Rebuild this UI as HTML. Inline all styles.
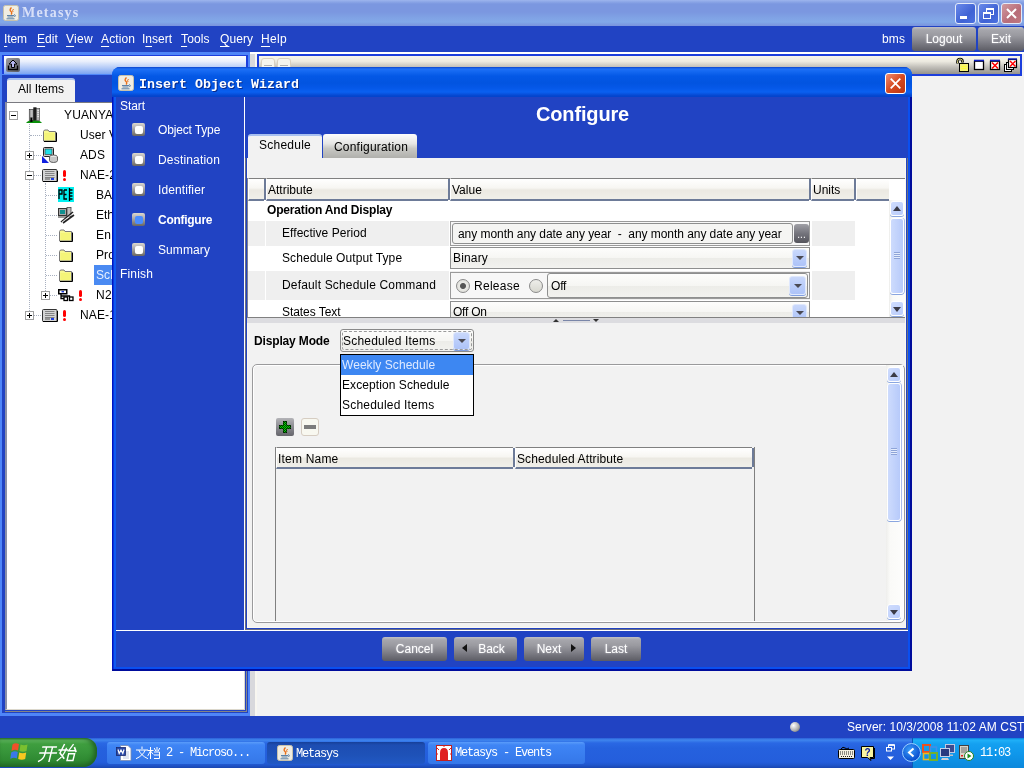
<!DOCTYPE html>
<html><head><meta charset="utf-8">
<style>
*{box-sizing:border-box;margin:0;padding:0}
html,body{width:1024px;height:768px;overflow:hidden}
body{position:relative;background:#2143c3;font-family:"Liberation Sans",sans-serif;font-size:12px;color:#000}
.a{position:absolute}
.w{color:#fff}
.t{position:absolute;white-space:nowrap;line-height:16px}
/* main title bar */
#mt{left:0;top:0;width:1024px;height:26px;background:linear-gradient(#9db5ed 0,#8aa5e6 2px,#7b97e0 4px,#7b97e0 12px,#80a3e5 18px,#82a9e8 22px,#7d9de2 24px,#7a94de 26px)}
#mt .ttl{left:22px;top:5px;font-family:"Liberation Serif",serif;font-weight:bold;font-size:14px;color:#d8e0f8;letter-spacing:1.2px}
.cap{position:absolute;top:3px;width:21px;height:21px;border:1px solid #e4ebfa;border-radius:3px}
/* menu */
#menu{left:0;top:26px;width:1024px;height:26px;background:#2143c3}
.btn{position:absolute;border-radius:2px;background:linear-gradient(#c0c0c4 0,#a6a6ac 12%,#9a9aa0 35%,#7e7e86 65%,#5c5c64 100%);color:#fff;text-align:center;font-size:12px;border-radius:3px;text-shadow:0 0 2px #c8c8d0}
/* panels */
.tb{position:absolute;border:1px solid #5c86f6;background:linear-gradient(#fff 0,#dfe8fb 45%,#a9c0f4 100%)}
.tbg{position:absolute;border:1px solid #5c86f6;background:linear-gradient(#fff 0,#e6e6e6 45%,#bdbdbd 100%)}

/* dialog */
#dlg{border-left:4px solid #0f5af0;border-right:4px solid #0a4ff0;border-bottom:4px solid #0a4ff0}
#dt{left:-4px;top:0;width:800px;height:30px;border-radius:8px 8px 0 0;background:linear-gradient(#0a44cc 0,#1e70f6 2px,#1266f0 5px,#0458e6 9px,#0254e0 16px,#0558e8 21px,#0a60f0 25px,#0444cc 29px)}
#dt .ttl{left:27px;top:10px;font-family:"Liberation Mono",monospace;font-weight:bold;font-size:13.33px;color:#fff;text-shadow:1px 1px 0 #0a2a8a}
.nav .ic{position:absolute;left:16px;width:13px;height:13px;border-radius:2px;background:linear-gradient(#dcd8cc 0,#b4b2b4 35%,#8a8886 70%,#6a6660 100%);}
.nav .ic i{position:absolute;left:3px;top:3px;width:8px;height:8px;border-radius:2px;background:#fff}
.nav .ic.sel i{background:#4b8dff}
.hd{position:absolute;top:0;height:23px;background:linear-gradient(#fff 0,#f7f6f2 45%,#ebe9e2 55%,#f0efe9 100%);border-top:1px solid #808080;border-bottom:2px solid #6d7b98;border-left:1px solid #fff;line-height:19px;padding:2px 0 0 1px;white-space:nowrap;overflow:hidden}
.hs{position:absolute;top:1px;width:2px;height:21px;background:#6d7b98}
.cb{position:absolute;border:1px solid #8e8f8f;background:linear-gradient(#fdfdfc 0,#f6f6f3 50%,#ecece8 52%,#f2f2ef 100%);white-space:nowrap;overflow:hidden}
.ar{position:absolute;width:15px;border:1px solid #dfe8fd;border-radius:3px;background:linear-gradient(#c9d8fb 0,#bacdfa 50%,#adc3f8 100%);box-shadow:0 1px 0 #7f9ee0}
.ar:after{content:"";position:absolute;left:3px;top:50%;margin-top:-2px;border:4px solid transparent;border-top:4px solid #4a4a54;border-bottom:0}
.ar.w17{width:17px}.ar.w17:after{left:4px}
.sb{position:absolute;background:linear-gradient(90deg,#eeeeec,#fafaf8 4px,#fdfdfc)}
.sbb{position:absolute;left:1px;width:14px;height:15px;border:1px solid #fff;border-radius:3px;background:linear-gradient(135deg,#cfdcfd,#b9ccfb);box-shadow:0 1px 0 #8aa6e0}
.sbt{position:absolute;left:1px;width:14px;border:1px solid #fff;border-radius:3px;background:linear-gradient(90deg,#cddbfd,#b7cafa);box-shadow:0 1px 0 #8aa6e0,1px 0 0 #a8bcec}
.sbt:before{content:"";position:absolute;left:3px;top:50%;margin-top:-4px;width:6px;height:7px;background:repeating-linear-gradient(#8ea4d8 0,#8ea4d8 1px,#e4ecfc 1px,#e4ecfc 2px)}
.up:after{content:"";position:absolute;left:2px;top:4px;border:4px solid transparent;border-bottom:5px solid #3b3b46;border-top:0}
.dn:after{content:"";position:absolute;left:2px;top:5px;border:4px solid transparent;border-top:5px solid #3b3b46;border-bottom:0}

.tr{position:absolute;left:0;top:0}
.eb{position:absolute;width:9px;height:9px;border:1px solid #a0a0a0;background:#fff}
.eb:before{content:"";position:absolute;left:1px;top:3px;width:5px;height:1px;background:#000}
.eb.p:after{content:"";position:absolute;left:3px;top:1px;width:1px;height:5px;background:#000}
.vd{position:absolute;width:0;border-left:1px dotted #a8b0c0}
.hdl{position:absolute;height:0;border-top:1px dotted #a8b0c0}
.ex{position:absolute;width:3px;height:11px}
.ex:before{content:"";position:absolute;left:0;top:0;width:3px;height:7px;background:#f00;border-radius:1.5px}
.ex:after{content:"";position:absolute;left:0;top:8px;width:3px;height:3px;background:#f00;border-radius:1.5px}
svg{position:absolute;overflow:visible}

.bb{position:absolute;background:#4f86f8}
.sim{font-family:"Liberation Mono",monospace;font-size:12px;letter-spacing:-1.2px;color:#fff}
.tbn{position:absolute;top:742px;height:22px;border-radius:3px}
.cj{stroke:#fff;fill:none;stroke-width:1;stroke-linecap:square}
u{text-underline-offset:2.5px}
</style></head><body><div id="root" style="position:absolute;left:0;top:0;width:1024px;height:768px;will-change:transform">

<!-- main title bar -->
<div id="mt" class="a">
  <svg style="left:3px;top:5px" width="16" height="16" viewBox="0 0 16 16"><rect x="0.5" y="0.5" width="15" height="15" rx="2" fill="#f0ede2" stroke="#c8c2ac"/><path d="M8.5 2.5Q6 5 8 6.5Q9.5 8 8 9.5" fill="none" stroke="#e8701a" stroke-width="1.4"/><path d="M10.5 4Q9 5.5 10 7" fill="none" stroke="#e8701a" stroke-width="1"/><path d="M4 10.5H11 M4.5 12H10.5 M3.5 13.8H11.5" stroke="#5a82a8" stroke-width="1"/><path d="M11 9.5Q13.5 10 11.5 12" fill="none" stroke="#5a82a8" stroke-width="1"/></svg>
  <div class="t ttl">Metasys</div>
  <div class="cap" style="left:955px;background:linear-gradient(135deg,#6a8aea,#3f62d4 60%,#4a70e0)"><div class="a" style="left:4px;top:12px;width:7px;height:3px;background:#fff"></div></div>
  <div class="cap" style="left:978px;background:linear-gradient(135deg,#6a8aea,#3f62d4 60%,#4a70e0)"><div class="a" style="left:7px;top:4px;width:8px;height:7px;border:1px solid #fff;border-top-width:2px"></div><div class="a" style="left:4px;top:8px;width:8px;height:7px;border:1px solid #fff;border-top-width:2px;background:#4767d8"></div></div>
  <div class="cap" style="left:1001px;background:linear-gradient(135deg,#d09aa0,#b86c78 60%,#c07880)"><svg style="left:4px;top:4px" width="11" height="11" viewBox="0 0 11 11"><path d="M1 1L10 10M10 1L1 10" stroke="#fff" stroke-width="2"/></svg></div>
</div>

<!-- menu bar -->
<div id="menu" class="a">
  <div class="t w" style="left:4px;top:5px;letter-spacing:-0.084px"><u>I</u>tem</div>
  <div class="t w" style="left:37px;top:5px;letter-spacing:0.081px"><u>E</u>dit</div>
  <div class="t w" style="left:66px;top:5px;letter-spacing:0.248px"><u>V</u>iew</div>
  <div class="t w" style="left:101px;top:5px;letter-spacing:0.108px"><u>A</u>ction</div>
  <div class="t w" style="left:142px;top:5px">I<u>n</u>sert</div>
  <div class="t w" style="left:181px;top:5px;letter-spacing:0.131px"><u>T</u>ools</div>
  <div class="t w" style="left:220px;top:5px;letter-spacing:0.064px"><u>Q</u>uery</div>
  <div class="t w" style="left:261px;top:5px;letter-spacing:0.330px"><u>H</u>elp</div>
  <div class="t w" style="left:882px;top:5px;letter-spacing:0.110px">bms</div>
  <div class="btn" style="left:912px;top:1px;width:64px;height:24px;line-height:24px">Logout</div>
  <div class="btn" style="left:978px;top:1px;width:46px;height:24px;line-height:24px">Exit</div>
</div>

<!-- toolbars -->
<div class="bb" style="left:0;top:52px;width:250px;height:3px"></div>
<div class="bb" style="left:0;top:52px;width:2px;height:664px"></div>
<div class="bb" style="left:248px;top:52px;width:2px;height:664px"></div>
<div class="bb" style="left:0;top:74px;width:250px;height:1px"></div>
<div class="bb" style="left:0;top:713px;width:250px;height:3px"></div>
<div class="a" style="left:2px;top:55px;width:246px;height:19px;background:#1c3edc"></div><div class="a" style="left:4px;top:56px;width:242px;height:18px;background:linear-gradient(#fff 0,#e9effc 30%,#b4cbf7 65%,#7ba4f2 100%)"></div>
<div class="a" style="left:6px;top:58px;width:14px;height:14px;border-radius:2px;background:linear-gradient(135deg,#9a9aa0,#5a5a62)"><svg style="left:1px;top:1px" width="12" height="12" viewBox="0 0 12 12"><path d="M6 1L2 5H4.5V8.5H7.5V5H10Z" fill="#b8b8f0" stroke="#000" stroke-width="1"/><path d="M1.5 6.5V10.5H10.5V6.5" fill="none" stroke="#000" stroke-width="1.4"/></svg></div>
<div class="a" style="left:250px;top:52px;width:774px;height:2px;background:#fff"></div>
<div class="a" style="left:257px;top:54px;width:765px;height:22px;background:#1c3edc"></div><div class="a" style="left:259px;top:56px;width:761px;height:18px;background:linear-gradient(#f8f6ec 0,#eceae0 30%,#c0beb8 62%,#94928c 100%)"></div>

<div class="a" style="left:1022px;top:52px;width:2px;height:24px;background:#f2f2f2"></div>
<div class="a" style="left:261px;top:58px;width:14px;height:14px;border:1px solid #d8d0c0;border-radius:3px;background:#f6f5ee"><div class="a" style="left:2px;top:6px;width:8px;height:1px;background:#b0b0b0"></div></div>
<div class="a" style="left:277px;top:58px;width:14px;height:14px;border:1px solid #d8d0c0;border-radius:3px;background:#f6f5ee"><div class="a" style="left:2px;top:6px;width:8px;height:1px;background:#b0b0b0"></div></div>
<!-- right toolbar icons -->
<svg style="left:956px;top:58px" width="64" height="16" viewBox="0 0 64 16">
 <path d="M1.5 5.5V3.4Q1.5 1 4 1Q6.5 1 6.500 3.4V4.500" fill="none" stroke="#000" stroke-width="2.6"/><path d="M1.5 5.2V3.4Q1.5 1 4 1Q6.5 1 6.500 3.4V4.200" fill="none" stroke="#f0ec90" stroke-width="0.9"/>
 <rect x="3.5" y="5.5" width="9" height="8" fill="#f6f274" stroke="#000"/><path d="M5.5 8.5H10.500M5.5 10.500H10.5" stroke="#ffff30" stroke-width="1"/>
 <rect x="18.5" y="3.2" width="9" height="8.300" fill="#fff" stroke="#000" stroke-width="1.3"/><path d="M18 2.5H28" stroke="#1020c0" stroke-width="1.6"/>
 <rect x="34.500" y="3.2" width="9" height="8.300" fill="#fff" stroke="#000" stroke-width="1.3"/><path d="M34 2.5H44" stroke="#1020c0" stroke-width="1.6"/><path d="M36 4.500L42 10.500M42 4.500L36 10.500" stroke="#f00" stroke-width="1.6"/>
 <rect x="48.5" y="6.5" width="7" height="7" fill="#fff" stroke="#000"/><rect x="50.5" y="4.5" width="7" height="7" fill="#fff" stroke="#000"/>
 <rect x="52.500" y="1.5" width="8" height="8" fill="#fff" stroke="#000" stroke-width="1.2"/><path d="M52 1H61" stroke="#1020c0" stroke-width="1.4"/><path d="M54 3L59.5 8.5M59.5 3L54 8.500" stroke="#f00" stroke-width="1.5"/>
</svg>

<!-- left panel -->
<div class="a" style="left:7px;top:78px;width:68px;height:25px;background:#f2f2f2;border-radius:3px 3px 0 0;border-top:2px solid #a8c0f0"><div class="t" style="left:11px;top:1px">All Items</div></div>
<div class="a" style="left:5px;top:102px;width:242px;height:610px;border-right:1px solid #858585;border-bottom:1px solid #858585"></div><div class="a" style="left:5px;top:102px;width:240px;height:608px;background:#fff;border-top:1px solid #7a7a80;border-left:2px solid #8a90a8;border-right:1px solid #dcd8cc;border-bottom:1px solid #dcd8cc"></div>

<div class="tr">
<div class="vd" style="left:29px;top:124px;height:191px"></div>
<div class="vd" style="left:45px;top:183px;height:112px"></div>
<div class="hdl" style="left:30px;top:135px;width:12px"></div>
<div class="hdl" style="left:34px;top:155px;width:7px"></div>
<div class="hdl" style="left:34px;top:175px;width:7px"></div>
<div class="hdl" style="left:34px;top:315px;width:7px"></div>
<div class="hdl" style="left:46px;top:195px;width:11px"></div>
<div class="hdl" style="left:46px;top:215px;width:11px"></div>
<div class="hdl" style="left:46px;top:235px;width:11px"></div>
<div class="hdl" style="left:46px;top:255px;width:11px"></div>
<div class="hdl" style="left:46px;top:275px;width:11px"></div>
<div class="hdl" style="left:50px;top:295px;width:7px"></div>
<div class="eb" style="left:9px;top:111px"></div>
<div class="eb p" style="left:25px;top:151px"></div>
<div class="eb" style="left:25px;top:171px"></div>
<div class="eb p" style="left:41px;top:291px"></div>
<div class="eb p" style="left:25px;top:311px"></div>
<svg style="left:26px;top:107px" width="16" height="16" viewBox="0 0 16 16"><path d="M0 16Q2 13 8 13Q14 13 16 16Z" fill="#0a900a"/><rect x="3.300" y="2.500" width="4" height="11" fill="#dcdcdc" stroke="#303030" stroke-width="0.700"/><path d="M4.300 4H6.500M4.300 6H6.500M4.300 8H6.500M4.300 10H6.500" stroke="#404040" stroke-width="1" stroke-dasharray="0.8 0.600"/><rect x="7.300" y="0.300" width="3.200" height="13.200" fill="#1c1c1c"/><rect x="10.500" y="1.500" width="3.200" height="12" fill="#b4b4b4" stroke="#404040" stroke-width="0.600"/><path d="M11.300 3.500H13M11.300 5.500H13M11.300 7.500H13M11.300 9.500H13" stroke="#f0f0f0" stroke-width="0.800"/><rect x="4.300" y="10.500" width="2.200" height="4.500" fill="#000"/></svg>
<svg style="left:42px;top:129px" width="15" height="13" viewBox="0 0 15 13"><path d="M1.5 2.5 L2.5 1 H6 L7 2.5 H13.5 V12 H1.5 Z" fill="#f8f890" stroke="#787878" stroke-width="1"/><path d="M2 12.5 H14.5 V3.5" fill="none" stroke="#000" stroke-width="1"/><rect x="2.5" y="4" width="10" height="7" fill="#f4f478"/></svg>
<svg style="left:42px;top:147px" width="16" height="16" viewBox="0 0 16 16"><rect x="1.5" y="0.5" width="10" height="9" rx="1" fill="#d0d0d0" stroke="#222"/><rect x="3" y="2" width="7" height="5.5" fill="#20e0e8" stroke="#333" stroke-width="0.6"/><path d="M0 9V16H7Z" fill="#1020e0"/><ellipse cx="11.5" cy="10" rx="4" ry="2" fill="#e8e8e8" stroke="#444" stroke-width="0.8"/><path d="M7.5 10V13.5A4 2 0 0 0 15.5 13.5V10" fill="#c8c8c8" stroke="#444" stroke-width="0.8"/></svg>
<svg style="left:42px;top:169px" width="16" height="13" viewBox="0 0 16 13"><rect x="0.5" y="0.5" width="14.5" height="12" rx="1" fill="#d4d4d4" stroke="#333" stroke-width="1"/><path d="M3 2.500H12.500M3 4.500H12.500M3 6.500H12.500M3 8.500H12.500" stroke="#707070" stroke-width="0.800"/><rect x="9" y="9" width="3" height="2" fill="#2040e0"/><path d="M3 10H8" stroke="#555" stroke-width="1"/><path d="M1 12.5H15.5V2" fill="none" stroke="#000" stroke-width="1"/></svg>
<div class="ex" style="left:63px;top:170px"></div>
<svg style="left:58px;top:187px" width="16" height="15" viewBox="0 0 16 15"><rect width="16" height="15" fill="#00f0f0"/><path d="M1 12V3H4V7H1.5 M6 3V12H9 M6 3H9 M6 7.5H8.5" fill="none" stroke="#000" stroke-width="1.3"/><path d="M11.5 1V14 M11.5 3H14.5M11.5 6H14.5M11.5 9H14.5M11.5 12H14.5" stroke="#000" stroke-width="1.3"/></svg>
<svg style="left:58px;top:207px" width="16" height="16" viewBox="0 0 16 16"><rect x="0.5" y="1.5" width="8" height="7" fill="#a8a8a8" stroke="#333"/><rect x="2" y="3" width="5" height="4" fill="#109090"/><rect x="9" y="0.5" width="4" height="9" fill="#c0c0c0" stroke="#444" stroke-width="0.8"/><path d="M0 10H9" stroke="#333"/><path d="M3 15L15 5 M5 16L16 8" stroke="#222" stroke-width="1.6"/><path d="M4 15L15 6.5" stroke="#ddd" stroke-width="0.8"/></svg>
<svg style="left:58px;top:229px" width="15" height="13" viewBox="0 0 15 13"><path d="M1.5 2.5 L2.5 1 H6 L7 2.5 H13.5 V12 H1.5 Z" fill="#f8f890" stroke="#787878" stroke-width="1"/><path d="M2 12.5 H14.5 V3.5" fill="none" stroke="#000" stroke-width="1"/><rect x="2.5" y="4" width="10" height="7" fill="#f4f478"/></svg>
<svg style="left:58px;top:249px" width="15" height="13" viewBox="0 0 15 13"><path d="M1.5 2.5 L2.5 1 H6 L7 2.5 H13.5 V12 H1.5 Z" fill="#f8f890" stroke="#787878" stroke-width="1"/><path d="M2 12.5 H14.5 V3.5" fill="none" stroke="#000" stroke-width="1"/><rect x="2.5" y="4" width="10" height="7" fill="#f4f478"/></svg>
<svg style="left:58px;top:269px" width="15" height="13" viewBox="0 0 15 13"><path d="M1.5 2.5 L2.5 1 H6 L7 2.5 H13.5 V12 H1.5 Z" fill="#f8f890" stroke="#787878" stroke-width="1"/><path d="M2 12.5 H14.5 V3.5" fill="none" stroke="#000" stroke-width="1"/><rect x="2.5" y="4" width="10" height="7" fill="#f4f478"/></svg>
<svg style="left:58px;top:289px" width="16" height="13" viewBox="0 0 16 13"><rect x="0.75" y="0.75" width="8" height="4" fill="#fff" stroke="#000" stroke-width="1.5"/><rect x="3.5" y="2" width="2.5" height="1.4" fill="#2040e0"/><path d="M3 5V9.5H6 M3 7H11.5V8" fill="none" stroke="#000" stroke-width="1.3"/><rect x="6" y="8" width="3.5" height="3.5" fill="#fff" stroke="#000" stroke-width="1.3"/><rect x="11.5" y="8" width="3.5" height="3.5" fill="#fff" stroke="#000" stroke-width="1.3"/></svg>
<div class="ex" style="left:79px;top:290px"></div>
<svg style="left:42px;top:309px" width="16" height="13" viewBox="0 0 16 13"><rect x="0.5" y="0.5" width="14.5" height="12" rx="1" fill="#d4d4d4" stroke="#333" stroke-width="1"/><path d="M3 2.500H12.500M3 4.500H12.500M3 6.500H12.500M3 8.500H12.500" stroke="#707070" stroke-width="0.800"/><rect x="9" y="9" width="3" height="2" fill="#2040e0"/><path d="M3 10H8" stroke="#555" stroke-width="1"/><path d="M1 12.5H15.5V2" fill="none" stroke="#000" stroke-width="1"/></svg>
<div class="ex" style="left:63px;top:310px"></div>
<div class="a" style="left:94px;top:265px;width:30px;height:20px;background:#4a8af2"></div>
<div class="t" style="left:64px;top:107px;letter-spacing:0.141px">YUANYAN</div>
<div class="t" style="left:80px;top:127px;letter-spacing:0.054px">User V</div>
<div class="t" style="left:80px;top:147px;letter-spacing:0.109px">ADS</div>
<div class="t" style="left:80px;top:167px;letter-spacing:0.131px">NAE-2</div>
<div class="t" style="left:96px;top:187px">BA</div>
<div class="t" style="left:96px;top:207px">Eth</div>
<div class="t" style="left:96px;top:227px;letter-spacing:0.161px">En</div>
<div class="t" style="left:96px;top:247px;letter-spacing:0.109px">Pro</div>
<div class="t" style="left:96px;top:267px;color:#e8f0ff;letter-spacing:0.107px">Sch</div>
<div class="t" style="left:96px;top:287px;letter-spacing:0.330px">N2</div>
<div class="t" style="left:80px;top:307px;letter-spacing:0.131px">NAE-1</div>
</div>
<!-- right panel -->
<div class="a" style="left:250px;top:52px;width:7px;height:664px;background:linear-gradient(90deg,#d8d8dc 0,#d8d8dc 5px,#f8f6f0 5px)"></div><div class="a" style="left:250px;top:52px;width:774px;height:2px;background:#fff"></div>
<div class="a" style="left:257px;top:76px;width:767px;height:640px;background:#f2f2f2"></div>

<!-- status bar -->
<div class="a" style="left:0;top:716px;width:1024px;height:22px;background:#2143c3">
  <div class="a" style="left:790px;top:6px;width:10px;height:10px;border-radius:5px;background:radial-gradient(circle at 35% 35%,#fff,#b0b0b0 55%,#555)"></div><div class="t w" style="left:847px;top:3px;letter-spacing:0.052px">Server: 10/3/2008 11:02 AM CST</div>
</div>

<!-- taskbar -->
<div id="task" class="a" style="left:0;top:738px;width:1024px;height:30px;background:linear-gradient(#2a5fd8 0,#3f86ee 2px,#2a68e4 5px,#2561de 10px,#245edc 24px,#2056cc 27px,#1a46b0 30px)"></div>
<!-- start button -->
<div class="a" style="left:0;top:738px;width:97px;height:29px;border-radius:0 12px 14px 0;background:linear-gradient(#2f7a2f 0,#5fb85f 2px,#3f9e3f 6px,#37953a 14px,#2f8a32 22px,#256f28 29px);box-shadow:inset -3px 0 5px #1f5f22"></div>
<svg style="left:10px;top:742px" width="20" height="19" viewBox="0 0 20 19"><path d="M2.500 2.500Q5 0.500 9 2L8 8.500Q4.500 7 1.5 9Z" fill="#f0502a"/><path d="M10.500 2.500Q14 4 17.500 2.500L16.500 9Q13 10.500 9.5 9Z" fill="#7ac030"/><path d="M1.200 10.500Q4.500 8.500 7.800 10L6.800 16.500Q3.500 15 0.300 17Z" fill="#3a78e8"/><path d="M9.200 10.500Q12.500 12 16.200 10.500L15.200 17Q11.800 18.500 8.200 17Z" fill="#f8c820"/></svg>
<svg style="left:37px;top:744px" width="40" height="18" viewBox="0 0 27 12" preserveAspectRatio="none"><g transform="skewX(-14) translate(3,0)"><g style="stroke-width:1.1"><path class="cj" d="M1.5 2H10.5 M0.5 6H11.5 M4 2V7Q4 10 1 11.5 M8 2V11.5"/></g><g transform="translate(13,0)"><path class="cj" d="M2.5 0.5L1 6L4.5 9.5 M4.5 3Q4 8 0.500 11 M0 4H5.5 M8.5 0.5L6.5 4.500H11 M10 2.500L11.5 5 M7 6.5H11V11H7Z"/></g></g></svg>
<!-- task buttons -->
<div class="tbn" style="left:107px;width:158px;background:linear-gradient(#5a9cfa 0,#3f85f5 3px,#3a7ff0 50%,#3577e8 100%)"></div>
<svg style="left:116px;top:745px" width="16" height="16" viewBox="0 0 16 16"><path d="M4.500 0.500H12L15 3.500V15.500H4.500Z" fill="#fff" stroke="#7a8ab0" stroke-width="0.8"/><path d="M7 7H13M7 9H13M7 11H13M7 13H13" stroke="#a8b8d8" stroke-width="0.8"/><rect x="0.500" y="2.500" width="9" height="8" fill="#2a4aa8" stroke="#1a2a70" stroke-width="0.8"/><path d="M2 4.500L3.200 8.500L5 5L6.800 8.500L8 4.500" fill="none" stroke="#fff" stroke-width="1.2"/></svg>
<svg style="left:136px;top:747px" width="24" height="12" viewBox="0 0 24 12"><g><path class="cj" d="M6 0V1.5 M0.5 3H11.5 M9 3.5Q7 8.5 0.5 11.5 M3 3.5Q5 8.500 11.5 11.5"/></g><g transform="translate(12,0)"><path class="cj" d="M0 3.5H5 M2.5 0.5V11.5 M2.5 4L0 8.5 M2.5 4L5 7 M9 0.5V4 M6.5 1.5L7.500 3.5 M11.5 1.5L10.5 3.5 M6.5 5H11.5V11.500H6.5 M6.5 8H11.5"/></g></svg>
<div class="t sim" style="left:160px;top:745px">&nbsp;2 - Microso...</div>
<div class="tbn" style="left:267px;width:158px;background:linear-gradient(#163f98 0,#1d4db2 3px,#1e52b8 60%,#2158c4 100%)"></div>
<svg style="left:277px;top:745px" width="16" height="16" viewBox="0 0 16 16"><rect x="0.5" y="0.5" width="15" height="15" rx="2" fill="#f0ede2" stroke="#c8c2ac"/><path d="M8.5 2.5Q6 5 8 6.5Q9.5 8 8 9.5" fill="none" stroke="#e8701a" stroke-width="1.4"/><path d="M10.5 4Q9 5.5 10 7" fill="none" stroke="#e8701a" stroke-width="1"/><path d="M4 10.5H11 M4.5 12H10.5 M3.5 13.8H11.5" stroke="#5a82a8" stroke-width="1"/><path d="M11 9.5Q13.5 10 11.5 12" fill="none" stroke="#5a82a8" stroke-width="1"/></svg>
<div class="t sim" style="left:296px;top:746px">Metasys</div>
<div class="tbn" style="left:428px;width:157px;background:linear-gradient(#5a9cfa 0,#3f85f5 3px,#3a7ff0 50%,#3577e8 100%)"></div>
<svg style="left:436px;top:745px" width="16" height="16" viewBox="0 0 16 16"><rect x="0.500" y="0.500" width="15" height="15" fill="#fff" stroke="#c02020"/><path d="M4 15V8Q4 3 8 3Q12 3 12 8V15Z" fill="#e02020"/><path d="M1 3L3 5M15 3L13 5M8 0.500V2M2 9H0.500M14 9H15.5" stroke="#e02020" stroke-width="1"/></svg>
<div class="t sim" style="left:455px;top:745px">Metasys - Events</div>
<!-- tray -->
<div class="a" style="left:912px;top:738px;width:112px;height:30px;background:linear-gradient(#0c7edc 0,#1fb0f8 2px,#14a0f0 6px,#0f98ec 50%,#0c88dc 100%);border-left:1px solid #0a5ab8"></div>
<svg style="left:838px;top:746px" width="17" height="14" viewBox="0 0 17 14"><path d="M3 3Q5 0 7 2T11 2" fill="none" stroke="#000" stroke-width="1"/><rect x="0.500" y="3.500" width="16" height="9" rx="1" fill="#f4f0e0" stroke="#000"/><path d="M2 6H15M2 8H15M3 10.500H14" stroke="#222" stroke-width="1" stroke-dasharray="1 1"/></svg>
<svg style="left:861px;top:746px" width="14" height="15" viewBox="0 0 14 15"><path d="M0.500 0.500H12.500V11.500H9L10 14.500L6.500 11.500H0.500Z" fill="#f8f4a0" stroke="#000"/><path d="M13.500 2V12.500H10" fill="none" stroke="#000" stroke-width="1"/><text x="3.500" y="10" font-family="Liberation Sans" font-weight="bold" font-size="10" fill="#1020a0">?</text></svg>
<svg style="left:886px;top:744px" width="9" height="17" viewBox="0 0 9 17"><rect x="2.500" y="1" width="6" height="4" fill="none" stroke="#fff" stroke-width="1"/><path d="M2.500 1H8.500" stroke="#fff" stroke-width="1.6"/><rect x="0.500" y="3.500" width="5" height="3.500" fill="#245edb" stroke="#fff"/><path d="M1 12.500H8L4.500 16Z" fill="#fff"/></svg>
<div class="a" style="left:902px;top:743px;width:19px;height:19px;border-radius:10px;border:1px solid #9ad0ff;background:radial-gradient(circle at 40% 35%,#3a9cf8,#0a50d0 70%,#083ca8)"><svg style="left:4px;top:4px" width="9" height="9" viewBox="0 0 9 9"><path d="M6.500 0.500L2 4.500L6.500 8.500" fill="none" stroke="#fff" stroke-width="2"/></svg></div>
<svg style="left:922px;top:744px" width="16" height="17" viewBox="0 0 16 17"><rect x="1" y="1" width="7" height="7" fill="none" stroke="#e85020" stroke-width="2"/><rect x="8.500" y="3" width="6" height="6" fill="none" stroke="#4090e8" stroke-width="1.6"/><rect x="1.500" y="9.500" width="6" height="6" fill="none" stroke="#e8b820" stroke-width="1.600"/><rect x="8" y="9" width="7" height="7" fill="none" stroke="#70b030" stroke-width="2"/></svg>
<svg style="left:940px;top:744px" width="15" height="17" viewBox="0 0 15 17"><rect x="5.500" y="0.500" width="9" height="8" fill="#3a4a90" stroke="#c0c8e0"/><rect x="0.500" y="4.500" width="9" height="8" fill="#2a3a80" stroke="#c8d0e8"/><path d="M2 14H8L9 16H1Z" fill="#d0d0d8"/><path d="M9 10.500H13V12H9" fill="#c0c0c8"/></svg>
<svg style="left:958px;top:744px" width="16" height="17" viewBox="0 0 16 17"><rect x="1.500" y="1.500" width="9" height="13" fill="#d8d4c8" stroke="#404040"/><path d="M3 4H9M3 6H9M3 8H9" stroke="#707070" stroke-width="1"/><rect x="3" y="11" width="2" height="1.500" fill="#e02020"/><circle cx="11" cy="12" r="4.500" fill="#fff" stroke="#208020"/><path d="M9.500 9.500V14.500L13.500 12Z" fill="#209020"/></svg>
<div class="t sim" style="left:980px;top:745px">11:03</div>

<!-- dialog -->
<div id="dlg" class="a" style="left:112px;top:67px;width:800px;height:604px;background:#2143c3;border-radius:8px 8px 0 0">
  <div class="a" style="left:-4px;top:8px;width:1px;height:596px;background:#0014c0"></div><div class="a" style="left:-3px;top:8px;width:1px;height:595px;background:#0836dc"></div><div class="a" style="left:794px;top:8px;width:2px;height:596px;background:#000c9c"></div><div class="a" style="left:-4px;top:602px;width:800px;height:2px;background:#000c9c"></div>
  <div id="dt" class="a">
    <svg style="left:6px;top:8px" width="16" height="16" viewBox="0 0 16 16"><rect x="0.5" y="0.5" width="15" height="15" rx="2" fill="#f0ede2" stroke="#c8c2ac"/><path d="M8.5 2.5Q6 5 8 6.5Q9.5 8 8 9.5" fill="none" stroke="#e8701a" stroke-width="1.4"/><path d="M10.5 4Q9 5.5 10 7" fill="none" stroke="#e8701a" stroke-width="1"/><path d="M4 10.5H11 M4.5 12H10.5 M3.5 13.8H11.5" stroke="#5a82a8" stroke-width="1"/><path d="M11 9.5Q13.5 10 11.5 12" fill="none" stroke="#5a82a8" stroke-width="1"/></svg>
    <div class="t ttl">Insert Object Wizard</div>
    <div class="a" style="left:773px;top:6px;width:21px;height:21px;border:1px solid #fff;border-radius:3px;background:linear-gradient(135deg,#ee8c72,#d64a20 50%,#bc3410)"><svg style="left:4px;top:4px" width="11" height="11" viewBox="0 0 11 11"><path d="M0.700 0.700L10.300 10.300M10.300 0.700L0.700 10.300" stroke="#fff" stroke-width="1.800"/></svg></div>
  </div>
  <!-- nav; coordinates relative to dlg content box (page x-116, y-67) -->
  <div class="nav">
    <div class="t w" style="left:4px;top:31px;letter-spacing:-0.068px">Start</div>
    <div class="ic" style="top:56px"><i></i></div><div class="t w" style="left:42px;top:55px;letter-spacing:-0.150px">Object Type</div>
    <div class="ic" style="top:86px"><i></i></div><div class="t w" style="left:42px;top:85px;letter-spacing:0.179px">Destination</div>
    <div class="ic" style="top:116px"><i></i></div><div class="t w" style="left:42px;top:115px;letter-spacing:0.097px">Identifier</div>
    <div class="ic sel" style="top:146px"><i></i></div><div class="t w" style="left:42px;top:145px;font-weight:bold;letter-spacing:-0.27px">Configure</div>
    <div class="ic" style="top:176px"><i></i></div><div class="t w" style="left:42px;top:175px;letter-spacing:0.094px">Summary</div>
    <div class="t w" style="left:4px;top:199px;letter-spacing:0.165px">Finish</div>
  </div>
  <div class="a" style="left:128px;top:30px;width:1px;height:533px;background:#fff"></div><div class="a" style="left:129px;top:91px;width:1px;height:472px;background:#6a6e80"></div>
  <div class="a" style="left:129px;top:562px;width:663px;height:1px;background:#6a6e80"></div><div class="a" style="left:791px;top:91px;width:1px;height:472px;background:#6a6e80"></div>
  <div class="a" style="left:0;top:563px;width:792px;height:1px;background:#fff"></div>
  <div class="t w" style="left:420px;top:35px;font-size:20px;font-weight:bold;line-height:24px;letter-spacing:-0.15px">Configure</div>
  <!-- tabs -->
  <div class="a" style="left:132px;top:67px;width:74px;height:25px;background:#f2f2f2;border-top:2px solid #a8c0f0;border-radius:3px 3px 0 0"><div class="t" style="left:11px;top:1px;letter-spacing:0.245px">Schedule</div></div>
  <div class="a" style="left:207px;top:67px;width:94px;height:24px;background:linear-gradient(#fdfdfd 0,#e6e6e4 40%,#c8c8c4 60%,#b0b0ac 100%);border-radius:3px 3px 0 0"><div class="t" style="left:11px;top:5px;letter-spacing:0.202px">Configuration</div></div>
  <!-- content panel -->
  <div id="cp" class="a" style="left:131px;top:91px;width:659px;height:470px;background:#f2f2f2;box-shadow:inset 1px 0 0 #fbf9f2,inset -1px -1px 0 #fbf9f2">
<div class="a" style="left:0;top:20px;width:658px;height:140px;background:#fff;border-left:1px solid #7a8090;border-bottom:1px solid #808080;border-top:1px solid #808080"></div>
<div class="a" style="left:1px;top:63px;width:17px;height:25px;background:#efefef"></div>
<div class="a" style="left:19px;top:63px;width:183px;height:25px;background:#efefef"></div>
<div class="a" style="left:203px;top:63px;width:360px;height:25px;background:#efefef"></div>
<div class="a" style="left:565px;top:63px;width:43px;height:25px;background:#efefef"></div>
<div class="a" style="left:1px;top:113px;width:17px;height:29px;background:#efefef"></div>
<div class="a" style="left:19px;top:113px;width:183px;height:29px;background:#efefef"></div>
<div class="a" style="left:203px;top:113px;width:360px;height:29px;background:#efefef"></div>
<div class="a" style="left:565px;top:113px;width:43px;height:29px;background:#efefef"></div>
<div class="hd" style="left:1px;top:20px;width:16px"></div>
<div class="hd" style="left:19px;top:20px;width:182px">Attribute</div>
<div class="hd" style="left:203px;top:20px;width:359px">Value</div>
<div class="hd" style="left:564px;top:20px;width:43px">Units</div>
<div class="hd" style="left:609px;top:20px;width:33px"></div>
<div class="hs" style="left:17px;top:21px"></div>
<div class="hs" style="left:201px;top:21px"></div>
<div class="hs" style="left:562px;top:21px"></div>
<div class="hs" style="left:607px;top:21px"></div>
<div class="t" style="left:20px;top:44px;font-weight:bold;letter-spacing:-0.17px">Operation And Display</div>
<div class="t" style="left:35px;top:67px;letter-spacing:0.060px">Effective Period</div>
<div class="t" style="left:35px;top:92px;letter-spacing:0.080px">Schedule Output Type</div>
<div class="t" style="left:35px;top:119px;letter-spacing:0.163px">Default Schedule Command</div>
<div class="t" style="left:35px;top:146px;letter-spacing:-0.063px">States Text</div>
<div class="a" style="left:203px;top:63px;width:360px;height:25px;background:#f7f7f7;border:1px solid #9a9a9a"></div>
<div class="cb" style="left:205px;top:65px;width:341px;height:21px;border-radius:3px;line-height:21px;padding-left:5px;background:#f5f5f3;letter-spacing:-0.055px">any month any date any year &nbsp;- &nbsp;any month any date any year</div>
<div class="a" style="left:547px;top:66px;width:15px;height:19px;border-radius:3px;background:linear-gradient(#a0a0a6,#74747c 50%,#55555d);color:#fff;font-size:10px;line-height:22px;text-align:center;letter-spacing:0">...</div>
<div class="cb" style="left:203px;top:89px;width:360px;height:22px;line-height:20px;padding-left:2px;letter-spacing:0.164px">Binary</div>
<div class="ar" style="left:545px;top:91px;height:18px"></div>
<div class="a" style="left:203px;top:114px;width:360px;height:27px;background:#f7f7f7;border:1px solid #9a9a9a"></div>
<div class="a" style="left:209px;top:121px;width:14px;height:14px;border-radius:7px;border:1px solid #8a8a8a;background:radial-gradient(circle,#555 0,#555 2.5px,#e8e8e4 3.5px,#deded8 100%)"></div>
<div class="t" style="left:227px;top:120px;letter-spacing:0.28px">Release</div>
<div class="a" style="left:282px;top:121px;width:14px;height:14px;border-radius:7px;border:1px solid #8a8a8a;background:linear-gradient(#eeeeea,#d8d8d0)"></div>
<div class="cb" style="left:300px;top:115px;width:261px;height:25px;border-radius:3px;line-height:25px;padding-left:3px;letter-spacing:-0.2px">Off</div>
<div class="ar w17" style="left:542px;top:118px;height:19px"></div>
<div class="a" style="left:203px;top:143px;width:360px;height:16px;overflow:hidden"><div class="cb" style="left:0;top:0;width:360px;height:22px;line-height:20px;padding-left:2px;letter-spacing:-0.224px">Off On</div><div class="ar" style="left:342px;top:3px;height:18px"></div></div>
<div class="sb" style="left:642px;top:42px;width:16px;height:117px"><div class="sbb up" style="top:1px"></div><div class="sbt" style="top:18px;height:76px"></div><div class="sbb dn" style="top:101px"></div></div>

<div class="a" style="left:0;top:160px;width:658px;height:5px;background:#dcdce0"></div>
<div class="a" style="left:316px;top:162px;width:27px;height:1px;background:#7a86a8"></div>
<div class="a" style="left:306px;top:161px;border:3px solid transparent;border-bottom:3px solid #333;border-top:0"></div>
<div class="a" style="left:346px;top:161px;border:3px solid transparent;border-top:3px solid #333;border-bottom:0"></div>
<div class="t" style="left:7px;top:175px;font-weight:bold;letter-spacing:-0.15px">Display Mode</div>
<div class="cb" style="left:93px;top:171px;width:134px;height:23px;border-radius:3px;line-height:22px;padding-left:2px;border-color:#8a8a8a;letter-spacing:0.200px">Scheduled Items</div>
<div class="ar w17" style="left:206px;top:174px;height:18px"></div><div class="a" style="left:95px;top:173px;width:130px;height:19px;border:1px dashed #9a9a9a;border-radius:2px"></div>
<div class="a" style="left:5px;top:206px;width:653px;height:259px;border:1px solid #9a9a9c;border-radius:5px;background:#f2f2f2;box-shadow:inset 0 0 0 1px #fff"></div>
<div class="sb" style="left:639px;top:207px;width:17px;height:256px"><div class="sbb up" style="top:2px"></div><div class="sbt" style="top:18px;height:138px"></div><div class="sbb dn" style="top:239px"></div></div>
<div class="a" style="left:29px;top:260px;width:18px;height:18px;border-radius:2px;background:linear-gradient(#b4b4b8 0,#8e8e94 45%,#66666c 100%)"><svg style="left:3px;top:3px" width="12" height="12" viewBox="0 0 12 12"><defs><pattern id="ck" width="2" height="2" patternUnits="userSpaceOnUse"><rect width="2" height="2" fill="#00e800"/><rect width="1" height="1" fill="#003000"/><rect x="1" y="1" width="1" height="1" fill="#003000"/></pattern></defs><path d="M4 0H8V4H12V8H8V12H4V8H0V4H4Z" fill="#000"/><path d="M4.5 0.5H7.5V4.5H11.5V7.5H7.5V11.5H4.5V7.5H0.5V4.5H4.5Z" fill="url(#ck)"/></svg></div>
<div class="a" style="left:54px;top:260px;width:18px;height:18px;border-radius:3px;background:#f8f8f0;border:1px solid #d6cdc2"><div class="a" style="left:2px;top:6px;width:12px;height:4px;background:#7c7c7c"></div></div>
<div class="a" style="left:28px;top:289px;width:480px;height:174px;border-left:1px solid #808080;border-right:1px solid #808080;background:#f2f2f2"></div>
<div class="hd" style="left:29px;top:289px;width:237px;height:22px;letter-spacing:0.2px">Item Name</div>
<div class="hd" style="left:268px;top:289px;width:237px;height:22px;letter-spacing:0.12px">Scheduled Attribute</div>
<div class="hs" style="left:266px;top:290px;height:19px"></div>
<div class="hs" style="left:505px;top:290px;height:19px"></div>
<div class="a" style="left:93px;top:196px;width:134px;height:62px;border:1px solid #000;background:#fff"><div class="a" style="left:0;top:0;width:132px;height:20px;background:#3d87f2"></div><div class="t" style="left:1px;top:2px;color:#dfeaff;letter-spacing:0.050px">Weekly Schedule</div><div class="t" style="left:1px;top:22px;letter-spacing:0.080px">Exception Schedule</div><div class="t" style="left:1px;top:42px;letter-spacing:0.200px">Scheduled Items</div></div>
</div>
  <!-- buttons -->
  <div class="btn" style="left:266px;top:570px;width:65px;height:24px;line-height:24px">Cancel</div>
  <div class="btn" style="left:338px;top:570px;width:63px;height:24px;line-height:24px;padding-left:12px">Back<i class="a" style="left:8px;top:7px;border:4px solid transparent;border-right:5px solid #111;border-left:0"></i></div>
  <div class="btn" style="left:408px;top:570px;width:60px;height:24px;line-height:24px;padding-right:10px">Next<i class="a" style="left:47px;top:7px;border:4px solid transparent;border-left:5px solid #111;border-right:0"></i></div>
  <div class="btn" style="left:475px;top:570px;width:50px;height:24px;line-height:24px">Last</div>
</div>

</div></body></html>
